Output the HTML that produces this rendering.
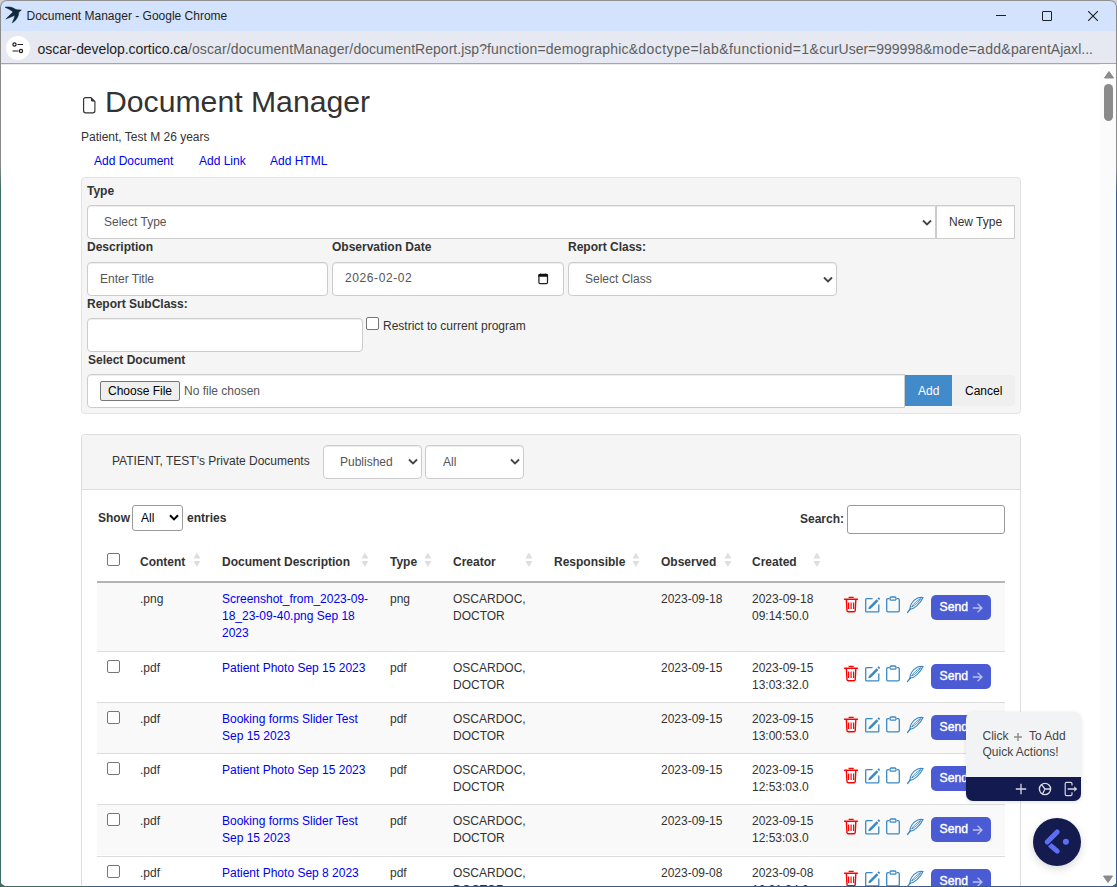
<!DOCTYPE html>
<html><head><meta charset="utf-8">
<style>
*{box-sizing:border-box;margin:0;padding:0}
html,body{width:1117px;height:887px;overflow:hidden;background:linear-gradient(#d0d0d0 0,#d0d0d0 40px,#3f6d64 40px);font-family:"Liberation Sans",sans-serif;}
.win{position:absolute;left:0;top:0;width:1117px;height:886px;border-radius:8px 8px 7px 7px;overflow:hidden;background:#fff;}
.frame{position:absolute;left:0;top:0;width:1116px;height:886px;border-radius:8px 8px 7px 7px;border:1px solid #777;pointer-events:none}
.abs{position:absolute}
.titlebar{position:absolute;left:0;top:0;width:1116px;height:31px;background:#d3e3fd}
.toolbar{position:absolute;left:0;top:31px;width:1116px;height:33px;background:#e6e9f1;border-bottom:1px solid #a4a6aa}
.ttl{position:absolute;left:26.5px;top:9px;font-size:12px;color:#1f1f1f;white-space:nowrap}
.url{position:absolute;top:10px;font-size:14px;color:#1f1f1f;white-space:nowrap}
.content{position:absolute;left:0;top:64px;width:1116px;height:822px;background:#fff;overflow:hidden}
.t12{font-size:12px;line-height:17px;color:#333;white-space:nowrap}
.b{font-weight:bold}
.t12,.cell{margin-top:1px}

.panel{position:absolute;background:#f5f5f5;border:1px solid #e3e3e3;border-radius:4px}
.inp{position:absolute;background:#fff;border:1px solid #ccc;border-radius:4px;box-shadow:inset 0 1px 1px rgba(0,0,0,.075)}
.sel .chev{position:absolute;width:9px;height:6px}
.row{position:absolute;left:97px;width:908px;border-top:1px solid #ddd}
.odd{background:#f9f9f9}
.cell{position:absolute;font-size:12px;line-height:17px;color:#333;white-space:nowrap}
.cell.lnk,.t12.lnk{color:#0000ee}
.chk{width:13px;height:13px;border:1px solid #767676;border-radius:2px;background:#fff}
.sendt{left:8.5px;top:4px;line-height:17px;font-size:12.2px;font-weight:normal;-webkit-text-stroke:0.4px #fff}
.send{position:absolute;width:60px;height:25px;background:#4a5bd4;border-radius:5px;color:#fff;font-size:12px;font-weight:bold}
</style></head><body>
<div class="win">
  <div class="titlebar">
    <svg class="abs" style="left:0;top:0" width="24" height="26" viewBox="0 0 24 26"><path d="M5 7.2C8.6 6.5 12.4 7 14.8 8.9L17 9.7L21.4 10L18.8 12.3C18.8 16.4 16.6 20.2 12.2 22.9C13.6 19.9 14.6 17.4 14.9 15.3C11.9 16.7 8.9 17.9 5.8 19C8.4 16.4 10.8 14.2 13 12C11.2 10.2 8.6 8.8 5 7.2Z" fill="#0c2a3b" stroke="#0c2a3b" stroke-width="0.5" stroke-linejoin="round"/></svg>
    <div class="ttl">Document Manager - Google Chrome</div>
    <div class="abs" style="left:996px;top:15px;width:10px;height:1px;background:#1f1f1f"></div>
    <div class="abs" style="left:1042px;top:11px;width:10px;height:10px;border:1px solid #1f1f1f;border-radius:1px"></div>
    <svg class="abs" style="left:1088px;top:11px" width="10" height="10" viewBox="0 0 10 10"><path d="M0 0L10 10M10 0L0 10" stroke="#1f1f1f" stroke-width="1.1"/></svg>
  </div>
  <div class="toolbar">
    <div class="abs" style="left:6px;top:5px;width:24px;height:24px;border-radius:12px;background:#fff"></div>
    <svg class="abs" style="left:11px;top:10px" width="14" height="14" viewBox="0 0 14 14"><circle cx="3.5" cy="3.5" r="1.6" fill="none" stroke="#1f1f1f" stroke-width="1.2"/><path d="M6.5 3.5H12" stroke="#1f1f1f" stroke-width="1.2"/><circle cx="10" cy="10" r="1.6" fill="none" stroke="#1f1f1f" stroke-width="1.2"/><path d="M1.5 10H7.5" stroke="#1f1f1f" stroke-width="1.2"/></svg>
    <span class="url" style="left:37.6px;letter-spacing:-0.06px;color:#1f1f1f">oscar-develop.cortico.ca</span><span class="url" style="left:187.9px;letter-spacing:0.126px;color:#5e5e5e">/oscar/</span><span class="url" style="left:230.8px;letter-spacing:0.122px;color:#5e5e5e">documentManager/</span><span class="url" style="left:353.4px;letter-spacing:0.027px;color:#5e5e5e">documentReport.jsp?</span><span class="url" style="left:487px;letter-spacing:0.176px;color:#5e5e5e">function=demographic&amp;</span><span class="url" style="left:638.2px;letter-spacing:0.464px;color:#5e5e5e">doctype=lab&amp;</span><span class="url" style="left:729px;letter-spacing:0.382px;color:#5e5e5e">functionid=1&amp;</span><span class="url" style="left:819.2px;letter-spacing:-0.01px;color:#5e5e5e">curUser=999998&amp;</span><span class="url" style="left:932.3px;letter-spacing:0.31px;color:#5e5e5e">mode=add&amp;</span><span class="url" style="left:1011px;letter-spacing:0.021px;color:#5e5e5e">parentAjaxl...</span>
  </div>
  <div class="content" id="c">
    <!-- scrollbar -->
    <div class="abs" style="left:1100px;top:0;width:16px;height:823px;background:#fbfbfb"></div>
    <svg class="abs" style="left:1103.5px;top:7px" width="10" height="8" viewBox="0 0 10 8"><path d="M5 0.5L9.5 7H0.5Z" fill="#8a8a8a" stroke="#8a8a8a" stroke-linejoin="round"/></svg>
    <div class="abs" style="left:1104px;top:20px;width:9px;height:37px;border-radius:4.5px;background:#8a8a8a"></div>
    <div class="abs" style="left:0;top:0;width:1100px;height:1px;background:#ececec"></div>
    <svg class="abs" style="left:1103px;top:811px" width="10" height="8" viewBox="0 0 10 8"><path d="M0.5 1H9.5L5 7.5Z" fill="#8a8a8a" stroke="#8a8a8a" stroke-linejoin="round"/></svg>

    <!-- header -->
    <svg class="abs" style="left:82px;top:33px" width="14" height="17" viewBox="0 0 14 17"><path d="M1.6 2.6Q1.6 0.6 3.6 0.6H9L12.9 4.6V13.8Q12.9 15.8 10.9 15.8H3.6Q1.6 15.8 1.6 13.8Z" fill="none" stroke="#333" stroke-width="1.15"/><path d="M9 0.6V3.2Q9 4.6 10.4 4.6H12.9Z" fill="#333"/></svg>
    <div class="abs" style="left:105px;top:20px;font-size:30.2px;line-height:36px;color:#333;white-space:nowrap">Document Manager</div>
    <div class="abs t12" style="left:81px;top:64px">Patient, Test M 26 years</div>
    <div class="abs t12 lnk" style="left:94px;top:88px">Add Document</div>
    <div class="abs t12 lnk" style="left:199px;top:88px">Add Link</div>
    <div class="abs t12 lnk" style="left:270px;top:88px">Add HTML</div>

    <!-- panel 1 -->
    <div class="panel" style="left:81px;top:113px;width:940px;height:237px"></div>
    <div class="abs t12 b" style="left:87px;top:118px">Type</div>
    <div class="inp" style="left:87px;top:141px;width:849px;height:34px;border-radius:4px 0 0 4px"></div>
    <div class="abs t12" style="left:104px;top:149px;color:#555">Select Type</div>
    <svg class="abs" style="left:922px;top:155px" width="10" height="7" viewBox="0 0 10 7"><path d="M1 1.5L5 5.5L9 1.5" fill="none" stroke="#444" stroke-width="1.8"/></svg>
    <div class="inp" style="left:936px;top:141px;width:79px;height:34px;border-radius:0"></div>
    <div class="abs t12" style="left:949px;top:149px">New Type</div>

    <div class="abs t12 b" style="left:87px;top:174px">Description</div>
    <div class="abs t12 b" style="left:332px;top:174px">Observation Date</div>
    <div class="abs t12 b" style="left:568px;top:174px">Report Class:</div>
    <div class="inp" style="left:87px;top:198px;width:241px;height:34px"></div>
    <div class="abs t12" style="left:100px;top:206px;color:#555">Enter Title</div>
    <div class="inp" style="left:332px;top:198px;width:232px;height:34px"></div>
    <div class="abs t12" style="left:345px;top:205px;color:#555;letter-spacing:0.6px">2026-02-02</div>
    <svg class="abs" style="left:537px;top:208px" width="13" height="13" viewBox="0 0 13 13"><rect x="1.9" y="2.4" width="8.6" height="9.3" rx="1.2" fill="none" stroke="#222" stroke-width="1.25"/><rect x="1.4" y="2.2" width="9.6" height="2.6" rx="0.6" fill="#111"/><path d="M3.3 1.2L4.2 2.6H2.4ZM8.6 1.2L9.5 2.6H7.7Z" fill="#111"/></svg>
    <div class="inp" style="left:568px;top:198px;width:269px;height:34px"></div>
    <div class="abs t12" style="left:585px;top:206px;color:#555">Select Class</div>
    <svg class="abs" style="left:823px;top:212px" width="10" height="7" viewBox="0 0 10 7"><path d="M1 1.5L5 5.5L9 1.5" fill="none" stroke="#444" stroke-width="1.8"/></svg>

    <div class="abs t12 b" style="left:87px;top:231px">Report SubClass:</div>
    <div class="inp" style="left:87px;top:254px;width:276px;height:34px"></div>
    <div class="abs" style="left:366px;top:253px;width:13px;height:13px;border:1px solid #767676;border-radius:2px;background:#fff"></div>
    <div class="abs t12" style="left:383px;top:253px">Restrict to current program</div>

    <div class="abs t12 b" style="left:88px;top:287px">Select Document</div>
    <div class="inp" style="left:87px;top:310px;width:818px;height:34px;border-radius:4px 0 0 4px"></div>
    <div class="abs" style="left:100px;top:317px;width:80px;height:20px;border:1px solid #767676;border-radius:2px;background:#efefef"></div>
    <div class="abs t12" style="left:108px;top:318px;color:#000">Choose File</div>
    <div class="abs t12" style="left:184px;top:318px;color:#555">No file chosen</div>
    <div class="abs" style="left:905px;top:311px;width:47px;height:31px;background:#428bca"></div>
    <div class="abs t12" style="left:918px;top:318px;color:#fff">Add</div>
    <div class="abs" style="left:952px;top:311px;width:63px;height:31px;background:#efefef;border-radius:0 4px 4px 0"></div>
    <div class="abs t12" style="left:965px;top:318px;color:#000">Cancel</div>

    <!-- panel 2 -->
    <div class="abs" style="left:81px;top:370px;width:940px;height:600px;border:1px solid #ddd;border-radius:4px;background:#fff"></div>
    <div class="abs" style="left:82px;top:371px;width:938px;height:55px;background:#f5f5f5;border-bottom:1px solid #ddd;border-radius:3px 3px 0 0"></div>
    <div class="abs t12" style="left:112px;top:388px">PATIENT, TEST's Private Documents</div>
    <div class="inp" style="left:323px;top:381px;width:99px;height:34px"></div>
    <div class="abs t12" style="left:340px;top:389px;color:#555">Published</div>
    <svg class="abs" style="left:408px;top:394px" width="10" height="7" viewBox="0 0 10 7"><path d="M1 1.5L5 5.5L9 1.5" fill="none" stroke="#444" stroke-width="1.8"/></svg>
    <div class="inp" style="left:425px;top:381px;width:99px;height:34px"></div>
    <div class="abs t12" style="left:443px;top:389px;color:#555">All</div>
    <svg class="abs" style="left:510px;top:394px" width="10" height="7" viewBox="0 0 10 7"><path d="M1 1.5L5 5.5L9 1.5" fill="none" stroke="#444" stroke-width="1.8"/></svg>

    <div class="abs t12 b" style="left:98px;top:445px">Show</div>
    <div class="abs" style="left:132px;top:441px;width:51px;height:26px;border:1px solid #9a9a9a;border-radius:3px;background:#fff"></div>
    <div class="abs t12" style="left:141px;top:445px;color:#000">All</div>
    <svg class="abs" style="left:169px;top:450px" width="10" height="7" viewBox="0 0 10 7"><path d="M1 1.2L5 5.4L9 1.2" fill="none" stroke="#000" stroke-width="2"/></svg>
    <div class="abs t12 b" style="left:187px;top:445px">entries</div>
    <div class="abs t12 b" style="left:800px;top:446px">Search:</div>
    <div class="abs" style="left:847px;top:441px;width:158px;height:29px;border:1px solid #9a9a9a;border-radius:3px;background:#fff"></div>
<div class="abs" style="left:107px;top:489px;width:13px;height:13px;border:1px solid #767676;border-radius:2px;background:#fff"></div>
    <div class="abs t12 b" style="left:140px;top:489px">Content</div><svg class="abs" style="left:193px;top:488px" width="9" height="17" viewBox="0 0 9 17"><path d="M3.9 0.5L7.4 6.6H0.4Z" fill="#dedede"/><path d="M0.4 8.9H7.4L3.9 15Z" fill="#dedede"/></svg>
    <div class="abs t12 b" style="left:222px;top:489px">Document Description</div><svg class="abs" style="left:361px;top:488px" width="9" height="17" viewBox="0 0 9 17"><path d="M3.9 0.5L7.4 6.6H0.4Z" fill="#dedede"/><path d="M0.4 8.9H7.4L3.9 15Z" fill="#dedede"/></svg>
    <div class="abs t12 b" style="left:390px;top:489px">Type</div><svg class="abs" style="left:424px;top:488px" width="9" height="17" viewBox="0 0 9 17"><path d="M3.9 0.5L7.4 6.6H0.4Z" fill="#dedede"/><path d="M0.4 8.9H7.4L3.9 15Z" fill="#dedede"/></svg>
    <div class="abs t12 b" style="left:453px;top:489px">Creator</div><svg class="abs" style="left:525px;top:488px" width="9" height="17" viewBox="0 0 9 17"><path d="M3.9 0.5L7.4 6.6H0.4Z" fill="#dedede"/><path d="M0.4 8.9H7.4L3.9 15Z" fill="#dedede"/></svg>
    <div class="abs t12 b" style="left:554px;top:489px">Responsible</div><svg class="abs" style="left:632px;top:488px" width="9" height="17" viewBox="0 0 9 17"><path d="M3.9 0.5L7.4 6.6H0.4Z" fill="#dedede"/><path d="M0.4 8.9H7.4L3.9 15Z" fill="#dedede"/></svg>
    <div class="abs t12 b" style="left:661px;top:489px">Observed</div><svg class="abs" style="left:724px;top:488px" width="9" height="17" viewBox="0 0 9 17"><path d="M3.9 0.5L7.4 6.6H0.4Z" fill="#dedede"/><path d="M0.4 8.9H7.4L3.9 15Z" fill="#dedede"/></svg>
    <div class="abs t12 b" style="left:752px;top:489px">Created</div><svg class="abs" style="left:813px;top:488px" width="9" height="17" viewBox="0 0 9 17"><path d="M3.9 0.5L7.4 6.6H0.4Z" fill="#dedede"/><path d="M0.4 8.9H7.4L3.9 15Z" fill="#dedede"/></svg>
    <div class="abs" style="left:97px;top:517px;width:908px;height:2px;background:#b4b4b4"></div>

    <!--ROWS-->
<svg width="0" height="0" style="position:absolute"><defs>
<symbol id="trash" viewBox="0 0 16 17"><path d="M6.2 2V1.3H10.1V2" fill="none" stroke="#f00" stroke-width="1.2"/><path d="M1.6 3.2H14.4" stroke="#f00" stroke-width="1.6" stroke-linecap="round"/><path d="M3.4 4L4 14.6Q4.2 15.8 5.4 15.8H10.8Q12 15.8 12.2 14.6L12.8 4" fill="none" stroke="#f00" stroke-width="1.4"/><path d="M5.6 6.6V13M8.1 6.6V13M10.6 6.6V13" stroke="#f00" stroke-width="1.15"/></symbol>
<symbol id="edit" viewBox="0 0 17 17"><path d="M8.6 2.7H2.6Q1.7 2.7 1.7 3.6V14.9Q1.7 15.8 2.6 15.8H13.9Q14.8 15.8 14.8 14.9V8.4" fill="none" stroke="#3b88c6" stroke-width="1.3"/><path d="M4.3 13.2L4.9 10.9L12.6 3.2L14.4 5L6.7 12.7Z" fill="#3b88c6"/><path d="M13.4 2.4L14.2 1.6Q14.6 1.2 15 1.6L15.9 2.5Q16.3 2.9 15.9 3.3L15.1 4.1Z" fill="#3b88c6"/></symbol>
<symbol id="clip" viewBox="0 0 16 17"><path d="M4.2 2.7H2.9Q1.7 2.7 1.7 3.9V14.6Q1.7 15.8 2.9 15.8H13.1Q14.3 15.8 14.3 14.6V3.9Q14.3 2.7 13.1 2.7H11.8" fill="none" stroke="#3b88c6" stroke-width="1.3"/><rect x="5" y="1" width="6" height="3.2" rx="1.2" fill="none" stroke="#3b88c6" stroke-width="1.3"/></symbol>
<symbol id="feather" viewBox="0 0 18 18"><path d="M1.6 16.4L4.3 13" stroke="#3b88c6" stroke-width="1.4" stroke-linecap="round"/><path d="M3.9 13.3C3.6 9.6 6.4 4.6 11.6 2C13.4 1.4 15.4 1.3 17 1.5C16.2 3.6 14.2 6.6 10.7 9.8C8.6 11.8 6.2 12.9 3.9 13.3Z" fill="none" stroke="#3b88c6" stroke-width="1.1"/><path d="M5.6 11C7.6 7.6 10.6 4.8 14.8 2.6C13 5.6 9.8 8.8 5.6 11Z" fill="none" stroke="#3b88c6" stroke-width="0.9"/></symbol>
<symbol id="arr" viewBox="0 0 11 10"><path d="M0.8 5H10M5.6 0.8L10 5L5.6 9.2" fill="none" stroke="#b9c0f0" stroke-width="1.3"/></symbol>
</defs></svg>
    <div class="abs odd" style="left:97px;top:519px;width:908px;height:68px;"></div><div class="cell" style="left:140px;top:526px">.png</div><div class="cell lnk" style="left:222px;top:526px">Screenshot_from_2023-09-<br>18_23-09-40.png Sep 18<br>2023</div><div class="cell" style="left:390px;top:526px">png</div><div class="cell" style="left:453px;top:526px">OSCARDOC,<br>DOCTOR</div><div class="cell" style="left:661px;top:526px">2023-09-18</div><div class="cell" style="left:752px;top:526px">2023-09-18<br>09:14:50.0</div><svg class="abs" style="left:843px;top:532px" width="16" height="17"><use href="#trash"/></svg><svg class="abs" style="left:864px;top:532px" width="17" height="17"><use href="#edit"/></svg><svg class="abs" style="left:885px;top:532px" width="16" height="17"><use href="#clip"/></svg><svg class="abs" style="left:906px;top:532px" width="18" height="18"><use href="#feather"/></svg><div class="send" style="left:931px;top:531px"><span class="abs sendt">Send</span><svg class="abs" style="left:41px;top:8px" width="11" height="10"><use href="#arr"/></svg></div>
    <div class="abs " style="left:97px;top:587px;width:908px;height:51px;border-top:1px solid #ddd;"></div><div class="abs chk" style="left:107px;top:596px"></div><div class="cell" style="left:140px;top:595px">.pdf</div><div class="cell lnk" style="left:222px;top:595px">Patient Photo Sep 15 2023</div><div class="cell" style="left:390px;top:595px">pdf</div><div class="cell" style="left:453px;top:595px">OSCARDOC,<br>DOCTOR</div><div class="cell" style="left:661px;top:595px">2023-09-15</div><div class="cell" style="left:752px;top:595px">2023-09-15<br>13:03:32.0</div><svg class="abs" style="left:843px;top:601px" width="16" height="17"><use href="#trash"/></svg><svg class="abs" style="left:864px;top:601px" width="17" height="17"><use href="#edit"/></svg><svg class="abs" style="left:885px;top:601px" width="16" height="17"><use href="#clip"/></svg><svg class="abs" style="left:906px;top:601px" width="18" height="18"><use href="#feather"/></svg><div class="send" style="left:931px;top:600px"><span class="abs sendt">Send</span><svg class="abs" style="left:41px;top:8px" width="11" height="10"><use href="#arr"/></svg></div>
    <div class="abs odd" style="left:97px;top:638px;width:908px;height:51px;border-top:1px solid #ddd;"></div><div class="abs chk" style="left:107px;top:647px"></div><div class="cell" style="left:140px;top:646px">.pdf</div><div class="cell lnk" style="left:222px;top:646px">Booking forms Slider Test<br>Sep 15 2023</div><div class="cell" style="left:390px;top:646px">pdf</div><div class="cell" style="left:453px;top:646px">OSCARDOC,<br>DOCTOR</div><div class="cell" style="left:661px;top:646px">2023-09-15</div><div class="cell" style="left:752px;top:646px">2023-09-15<br>13:00:53.0</div><svg class="abs" style="left:843px;top:652px" width="16" height="17"><use href="#trash"/></svg><svg class="abs" style="left:864px;top:652px" width="17" height="17"><use href="#edit"/></svg><svg class="abs" style="left:885px;top:652px" width="16" height="17"><use href="#clip"/></svg><svg class="abs" style="left:906px;top:652px" width="18" height="18"><use href="#feather"/></svg><div class="send" style="left:931px;top:651px"><span class="abs sendt">Send</span><svg class="abs" style="left:41px;top:8px" width="11" height="10"><use href="#arr"/></svg></div>
    <div class="abs " style="left:97px;top:689px;width:908px;height:51px;border-top:1px solid #ddd;"></div><div class="abs chk" style="left:107px;top:698px"></div><div class="cell" style="left:140px;top:697px">.pdf</div><div class="cell lnk" style="left:222px;top:697px">Patient Photo Sep 15 2023</div><div class="cell" style="left:390px;top:697px">pdf</div><div class="cell" style="left:453px;top:697px">OSCARDOC,<br>DOCTOR</div><div class="cell" style="left:661px;top:697px">2023-09-15</div><div class="cell" style="left:752px;top:697px">2023-09-15<br>12:53:03.0</div><svg class="abs" style="left:843px;top:703px" width="16" height="17"><use href="#trash"/></svg><svg class="abs" style="left:864px;top:703px" width="17" height="17"><use href="#edit"/></svg><svg class="abs" style="left:885px;top:703px" width="16" height="17"><use href="#clip"/></svg><svg class="abs" style="left:906px;top:703px" width="18" height="18"><use href="#feather"/></svg><div class="send" style="left:931px;top:702px"><span class="abs sendt">Send</span><svg class="abs" style="left:41px;top:8px" width="11" height="10"><use href="#arr"/></svg></div>
    <div class="abs odd" style="left:97px;top:740px;width:908px;height:51px;border-top:1px solid #ddd;"></div><div class="abs chk" style="left:107px;top:749px"></div><div class="cell" style="left:140px;top:748px">.pdf</div><div class="cell lnk" style="left:222px;top:748px">Booking forms Slider Test<br>Sep 15 2023</div><div class="cell" style="left:390px;top:748px">pdf</div><div class="cell" style="left:453px;top:748px">OSCARDOC,<br>DOCTOR</div><div class="cell" style="left:661px;top:748px">2023-09-15</div><div class="cell" style="left:752px;top:748px">2023-09-15<br>12:53:03.0</div><svg class="abs" style="left:843px;top:754px" width="16" height="17"><use href="#trash"/></svg><svg class="abs" style="left:864px;top:754px" width="17" height="17"><use href="#edit"/></svg><svg class="abs" style="left:885px;top:754px" width="16" height="17"><use href="#clip"/></svg><svg class="abs" style="left:906px;top:754px" width="18" height="18"><use href="#feather"/></svg><div class="send" style="left:931px;top:753px"><span class="abs sendt">Send</span><svg class="abs" style="left:41px;top:8px" width="11" height="10"><use href="#arr"/></svg></div>
    <div class="abs " style="left:97px;top:792px;width:908px;height:51px;border-top:1px solid #ddd;"></div><div class="abs chk" style="left:107px;top:801px"></div><div class="cell" style="left:140px;top:800px">.pdf</div><div class="cell lnk" style="left:222px;top:800px">Patient Photo Sep 8 2023</div><div class="cell" style="left:390px;top:800px">pdf</div><div class="cell" style="left:453px;top:800px">OSCARDOC,<br>DOCTOR</div><div class="cell" style="left:661px;top:800px">2023-09-08</div><div class="cell" style="left:752px;top:800px">2023-09-08<br>12:31:34.0</div><svg class="abs" style="left:843px;top:806px" width="16" height="17"><use href="#trash"/></svg><svg class="abs" style="left:864px;top:806px" width="17" height="17"><use href="#edit"/></svg><svg class="abs" style="left:885px;top:806px" width="16" height="17"><use href="#clip"/></svg><svg class="abs" style="left:906px;top:806px" width="18" height="18"><use href="#feather"/></svg><div class="send" style="left:931px;top:805px"><span class="abs sendt">Send</span><svg class="abs" style="left:41px;top:8px" width="11" height="10"><use href="#arr"/></svg></div>
    <!--/ROWS-->
    <!-- widget -->
    <div class="abs" style="left:966px;top:648px;width:115px;height:89px;border-radius:7px;background:#f2f3f5;overflow:hidden;box-shadow:0 1px 4px rgba(0,0,0,0.12)">
      <div class="abs" style="left:16.5px;top:16px;font-size:12px;line-height:16px;color:#444;white-space:nowrap">Click</div>
      <svg class="abs" style="left:48px;top:21px" width="8" height="8" viewBox="0 0 8 8"><path d="M4 0V8M0 4H8" stroke="#8f8f8f" stroke-width="1.5"/></svg>
      <div class="abs" style="left:63px;top:16px;font-size:12px;line-height:16px;color:#444;white-space:nowrap">To Add</div>
      <div class="abs" style="left:16.5px;top:32px;font-size:12px;line-height:16px;color:#444;white-space:nowrap">Quick Actions!</div>
      <div class="abs" style="left:0;top:65px;width:115px;height:24px;background:#131a4f"></div>
      <svg class="abs" style="left:49px;top:71px" width="12" height="12" viewBox="0 0 12 12"><path d="M6 0.8V11.2M0.8 6H11.2" stroke="#d8d8e0" stroke-width="1.3"/></svg>
      <svg class="abs" style="left:72px;top:70px" width="14" height="14" viewBox="0 0 14 14"><circle cx="7" cy="7" r="5.6" fill="none" stroke="#d8d8e0" stroke-width="1.4"/><path d="M7 7L3.6 2.6M7 7L4.6 11.8M7 7H12.4" fill="none" stroke="#d8d8e0" stroke-width="1.3"/></svg>
      <svg class="abs" style="left:97.7px;top:69px" width="14" height="16" viewBox="0 0 14 16"><path d="M8 4.6V2.8Q8 1.4 6.6 1.4H2.6Q1.2 1.4 1.2 2.8V13.2Q1.2 14.6 2.6 14.6H6.6Q8 14.6 8 13.2V11.2" fill="none" stroke="#d8d8e0" stroke-width="1.2"/><path d="M3.6 8H10.6" stroke="#d8d8e0" stroke-width="1.4"/><path d="M10.2 5.2L13.2 8L10.2 10.8Z" fill="#d8d8e0"/></svg>
    </div>
    <div class="abs" style="left:1033px;top:754px;width:48px;height:48px;border-radius:24px;background:#131b4f;box-shadow:0 3px 8px rgba(0,0,0,0.15)">
      <svg class="abs" style="left:0;top:0" width="48" height="48" viewBox="0 0 48 48"><path d="M17.4 27.4L24.2 33.2" stroke="#5b6ef5" stroke-width="5" stroke-linecap="round"/><path d="M14.2 24L24.2 14" stroke="#131b4f" stroke-width="7.6" stroke-linecap="round"/><path d="M14.2 24L24.2 14" stroke="#5b6ef5" stroke-width="5" stroke-linecap="round"/><circle cx="32.9" cy="23.7" r="3" fill="#5b6ef5"/></svg>
    </div>

  </div>
</div>
<div class="abs" style="left:0;top:0;width:1117px;height:64px;border-top:1px solid #909090;border-left:1px solid #8a8a8a;border-right:1px solid #8a8a8a;border-radius:7px 7px 0 0;pointer-events:none"></div>
<div class="abs" style="left:0;top:64px;width:1px;height:823px;background:linear-gradient(#8a8a8a 0,#8a8a8a 100px,#3f6d64 125px)"></div>
<div class="abs" style="left:1116px;top:64px;width:1px;height:823px;background:linear-gradient(#8a8a8a 0,#8a8a8a 106px,#3b5a8a 130px)"></div>
<div class="abs" style="left:0;top:886px;width:1117px;height:1px;background:linear-gradient(90deg,#3f6d64,#3f6d64 80px,#3b5a8a 100px)"></div>
</body></html>
